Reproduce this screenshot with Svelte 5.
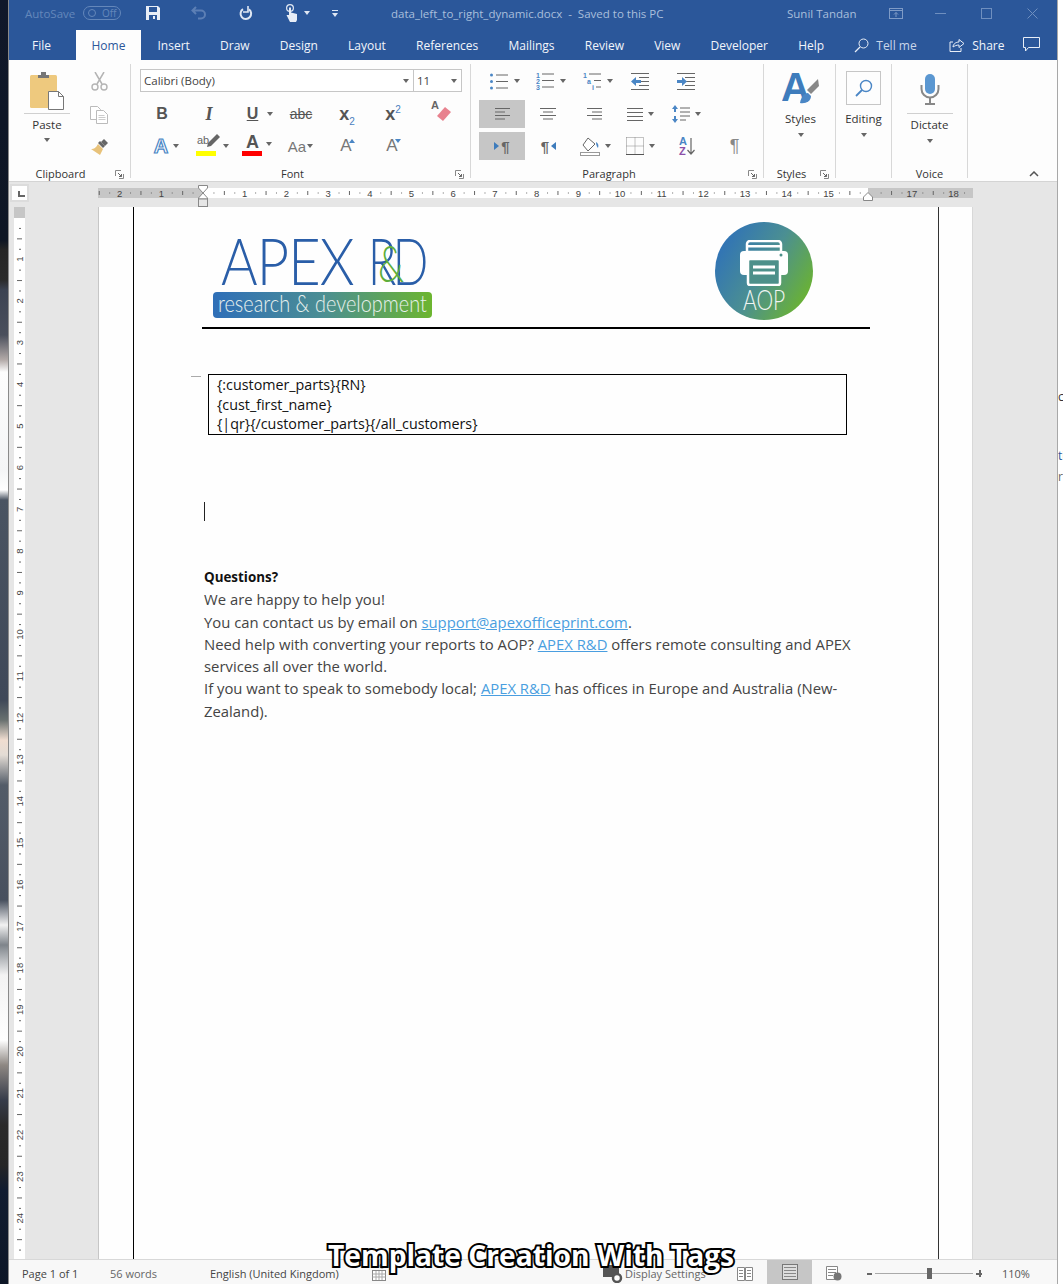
<script>
	const tabs = ['Insert', 'Draw', 'Design', 'Layout', 'References', 'Mailings', 'Review', 'View', 'Developer', 'Help'];
	const STEP = 41.7;
	const hTicks = [];
	for (let q = -10; q <= 74; q++) {
		if (q === 0 || q === 64) continue;
		hTicks.push({ x: 105 + (q * STEP) / 4, q, n: Math.abs(q / 4) });
	}
	const vTicks = [];
	for (let q = 1; q < 100; q++) {
		vTicks.push({ y: 10.5 + (q * STEP) / 4, q, n: q / 4 });
	}
</script>

{#snippet caret()}<i class="caret"></i>{/snippet}

{#snippet lines(w, h, rows)}
	<svg width={w} height={h} viewBox="0 0 {w} {h}">
		{#each rows as r}
			<rect x={r[0]} y={r[1]} width={r[2]} height="1" fill="#666" />
		{/each}
	</svg>
{/snippet}

{#snippet launcher()}
	<svg class="launch" width="9" height="9" viewBox="0 0 9 9">
		<path d="M.5 6V.5H6M8.5 4v4.5H4" fill="none" stroke="#888" />
		<path d="M3 3l3.5 3.5M6.5 4v2.5H4" fill="none" stroke="#666" />
	</svg>
{/snippet}

<div class="app">
	<div class="desktop"></div>
	<div class="window">
		<header class="titlebar">
			<span class="autosave">AutoSave</span>
			<span class="toggle"><i></i>Off</span>
			<svg class="qa save" width="16" height="16" viewBox="0 0 16 16">
				<path d="M1 1h12l2 2v12H1z" fill="#e8eef7" />
				<rect x="4" y="2" width="8" height="5" fill="#2b579a" />
				<rect x="4" y="10" width="8" height="5" fill="#2b579a" />
				<rect x="8" y="11" width="2" height="3" fill="#e8eef7" />
			</svg>
			<svg class="qa undo" width="16" height="14" viewBox="0 0 16 14">
				<path d="M5 1L1.5 4.5 5 8M2 4.5h8a4 4 0 0 1 0 8H7" fill="none" stroke="#5c7fb5" stroke-width="2" />
			</svg>
			<svg class="qa redo" width="15" height="15" viewBox="0 0 15 15">
				<path d="M5 3.2a5.3 5.3 0 1 0 6 .2" fill="none" stroke="#dfe7f3" stroke-width="2" />
				<path d="M10 0v6H5" fill="none" stroke="#dfe7f3" stroke-width="1.6" />
			</svg>
			<svg class="qa touch" width="14" height="18" viewBox="0 0 14 18">
				<circle cx="5" cy="4" r="3.4" fill="none" stroke="#dfe7f3" stroke-width="1.2" />
				<path d="M4 3.5h2v5l6 1.5v6l-1 2H5L1.5 11 4 11z" fill="#e8eef7" />
			</svg>
			<i class="caret light touch-caret"></i>
			<span class="qat-more"><b></b><i class="caret light"></i></span>
			<span class="doc-title">data_left_to_right_dynamic.docx &nbsp;-&nbsp; Saved to this PC</span>
			<span class="user">Sunil Tandan</span>
			<svg class="win display" width="14" height="11" viewBox="0 0 14 11">
				<rect x=".5" y=".5" width="13" height="10" fill="none" stroke="#7f9bc6" />
				<path d="M.5 2.5h13M7 9V4.5M5 6.5l2-2 2 2" fill="none" stroke="#7f9bc6" />
			</svg>
			<svg class="win min" width="11" height="11" viewBox="0 0 11 11"><path d="M0 5.5h11" stroke="#6f8fbf" /></svg>
			<svg class="win max" width="11" height="11" viewBox="0 0 11 11"><rect x=".5" y=".5" width="10" height="10" fill="none" stroke="#6f8fbf" /></svg>
			<svg class="win close" width="11" height="11" viewBox="0 0 11 11"><path d="M.5.5l10 10M10.5.5l-10 10" stroke="#6f8fbf" /></svg>
		</header>

		<nav class="tabs">
			<span class="tab file">File</span>
			<span class="tab home">Home</span>
			{#each tabs as t}<span class="tab">{t}</span>{/each}
			<span class="tell">
				<svg width="15" height="15" viewBox="0 0 15 15">
					<circle cx="9.5" cy="5.5" r="4.5" fill="none" stroke="#e8eef7" />
					<path d="M6 9L1 14" stroke="#e8eef7" stroke-width="1.3" />
				</svg>
				Tell me
			</span>
			<span class="share">
				<svg width="16" height="14" viewBox="0 0 16 14">
					<path d="M4 4H1v9.5h11V10" fill="none" stroke="#e8eef7" />
					<path d="M4 9c0-3 3-5 6-5V1.5l5 4-5 4V7C7.500 7 5.500 8 4 9z" fill="none" stroke="#e8eef7" />
				</svg>
				Share
			</span>
			<svg class="comment" width="17" height="15" viewBox="0 0 17 15">
				<path d="M.5.5h16v10H5.500L2.500 14v-3.500h-2z" fill="none" stroke="#e8eef7" />
			</svg>
		</nav>

		<section class="ribbon">
			<div class="group clip">
				<div class="tools clip-tools">
					<div class="paste">
						<svg width="35" height="38" viewBox="0 0 35 38">
							<rect x="0" y="3" width="27" height="33" rx="1.5" fill="#eec97e" />
							<path d="M8 3h3V0h5v3h3v3H8z" fill="#777" />
							<path d="M18.500 19.500h10l5 5v13h-15z" fill="#fff" stroke="#777" />
							<path d="M28.500 19.500v5h5" fill="none" stroke="#777" />
						</svg>
						<span class="split"></span>
						<span class="txt">Paste</span>
						{@render caret()}
					</div>
					<div class="clip-small">
						<svg width="17" height="19" viewBox="0 0 17 19">
							<path d="M4 0l7 12M13 0L6 12" stroke="#b4b4b4" stroke-width="1.500" fill="none" />
							<circle cx="4" cy="15" r="3" fill="none" stroke="#b4b4b4" stroke-width="1.400" />
							<circle cx="13" cy="15" r="3" fill="none" stroke="#b4b4b4" stroke-width="1.400" />
						</svg>
						<svg width="18" height="18" viewBox="0 0 18 18">
							<path d="M.5.500h7l3 3v10H.5z" fill="#fff" stroke="#bbb" />
							<path d="M6.500 4.500h7l4 4v9h-11z" fill="#fff" stroke="#bbb" />
							<path d="M8.500 9.500h6M8.500 11.500h7M8.500 13.500h7" stroke="#ccc" />
						</svg>
						<svg width="18" height="17" viewBox="0 0 18 17">
							<path d="M10 2l5 5-2 2-5-5z" fill="#666" />
							<path d="M14 0l4 4-3 3-4-4z" fill="#666" />
							<path d="M8 5l5 5-3 6-9-6c3 0 5-1 7-5z" fill="#e8c27a" />
						</svg>
					</div>
				</div>
				<div class="label">Clipboard{@render launcher()}</div>
			</div>

			<div class="group font">
				<div class="tools">
					<div class="combos">
						<span class="combo name">Calibri (Body){@render caret()}</span>
						<span class="combo size">11{@render caret()}</span>
					</div>
					<div class="row font-a">
						<span class="glyph bold">B</span>
						<span class="glyph ital">I</span>
						<span class="glyph under"><u>U</u>{@render caret()}</span>
						<span class="glyph strike">abc</span>
						<span class="glyph sc">x<sub>2</sub></span>
						<span class="glyph sc">x<sup>2</sup></span>
						<span class="glyph eraser">
							<b>A</b>
							<svg width="17" height="15" viewBox="0 0 17 15">
								<path d="M11 0l6 5-8 9-6-5z" fill="#e8828f" />
							</svg>
						</span>
					</div>
					<div class="row font-b">
						<span class="glyph effect">A{@render caret()}</span>
						<span class="glyph hl">
							<span class="ab">ab
								<svg width="15" height="15" viewBox="0 0 15 15"><path d="M12 0l3 3-9 9-4 1 1-4z" fill="#666" /></svg>
							</span>
							<i class="swatch yellow"></i>
							{@render caret()}
						</span>
						<span class="glyph col">A<i class="swatch red"></i>{@render caret()}</span>
						<span class="glyph case">Aa{@render caret()}</span>
						<span class="glyph grow">A<i class="tri up"></i></span>
						<span class="glyph grow">A<i class="tri down"></i></span>
					</div>
				</div>
				<div class="label">Font{@render launcher()}</div>
			</div>

			<div class="group para">
				<div class="tools">
					<div class="row para-a">
						<span class="pb">
							<svg width="18" height="17" viewBox="0 0 18 17">
								<circle cx="1.500" cy="2" r="1.500" fill="#4a86c5" /><circle cx="1.500" cy="8.500" r="1.500" fill="#4a86c5" /><circle cx="1.500" cy="15" r="1.500" fill="#4a86c5" />
								<path d="M6 2h12M6 8.500h12M6 15h12" stroke="#666" />
							</svg>{@render caret()}
						</span>
						<span class="pb">
							<svg width="18" height="18" viewBox="0 0 18 18">
								<text x="0" y="5.500" class="mini">1</text><text x="0" y="11.500" class="mini">2</text><text x="0" y="18" class="mini">3</text>
								<path d="M6 2h12M6 8.500h12M6 15h12" stroke="#666" />
							</svg>{@render caret()}
						</span>
						<span class="pb">
							<svg width="18" height="18" viewBox="0 0 18 18">
								<text x="0" y="5.500" class="mini">1</text><text x="4" y="11.500" class="mini">a</text><text x="9" y="18" class="mini">i</text>
								<path d="M6 2h12M11 8.500h7M13 15h5" stroke="#666" />
							</svg>{@render caret()}
						</span>
						<span class="pb">
							<svg width="18" height="17" viewBox="0 0 18 17">
								<path d="M0 .5h18M8 4.500h10M8 8.500h10M8 12.500h10M0 16.500h18" stroke="#666" />
								<path d="M0 8.500L5 4v3h5v3H5v3z" fill="#4a86c5" />
							</svg>
						</span>
						<span class="pb">
							<svg width="18" height="17" viewBox="0 0 18 17">
								<path d="M0 .5h18M8 4.500h10M8 8.500h10M8 12.500h10M0 16.500h18" stroke="#666" />
								<path d="M10 8.500L5 4v3H0v3h5v3z" fill="#4a86c5" />
							</svg>
						</span>
					</div>
					<div class="row para-b">
						<span class="pb active">{@render lines(15, 12, [[0, 0, 15], [0, 3.5, 10], [0, 7, 15], [0, 10.5, 10]])}</span>
						<span class="pb">{@render lines(16, 12, [[0, 0, 16], [3, 3.5, 10], [0, 7, 16], [3, 10.5, 10]])}</span>
						<span class="pb">{@render lines(15, 12, [[0, 0, 15], [5, 3.5, 10], [0, 7, 15], [5, 10.5, 10]])}</span>
						<span class="pb">{@render lines(16, 13, [[0, 0, 16], [0, 4, 16], [0, 8, 16], [0, 12, 16]])}{@render caret()}</span>
						<span class="pb">
							<svg width="18" height="18" viewBox="0 0 18 18">
								<path d="M3 0l3 4H4v3H2V4H0zM3 18l3-4H4v-3H2v3H0z" fill="#4a86c5" />
								<path d="M8 3h10M8 7h10M8 11h10M8 15h6" stroke="#666" />
							</svg>{@render caret()}
						</span>
					</div>
					<div class="row para-c">
						<span class="pb active dir"><i class="flag"></i><b>¶</b></span>
						<span class="pb dir"><b>¶</b><i class="flag back"></i></span>
						<span class="pb">
							<svg width="20" height="19" viewBox="0 0 20 19">
								<path d="M8 1l7 6-7 7-5-6z" fill="#fff" stroke="#666" />
								<path d="M16 5c2 1 3 3 2 6-1-1-2-3-2-6z" fill="#4a86c5" />
								<rect x=".5" y="15.500" width="19" height="3" fill="#fff" stroke="#999" />
							</svg>{@render caret()}
						</span>
						<span class="pb">
							<svg width="18" height="18" viewBox="0 0 18 18">
								<path d="M.5.5h17v17M.5.5v17M9 .5v17M.5 9h17" fill="none" stroke="#888" stroke-dasharray="1 1" />
								<path d="M0 17.500h18" stroke="#555" />
							</svg>{@render caret()}
						</span>
						<span class="pb sort">
							<span class="az"><b>A</b><b class="z">Z</b></span>
							<svg width="8" height="17" viewBox="0 0 8 17"><path d="M4 0v16M.5 12L4 16l3.500-4" fill="none" stroke="#666" stroke-width="1.200" /></svg>
						</span>
						<span class="pb pilcrow">¶</span>
					</div>
				</div>
				<div class="label">Paragraph{@render launcher()}</div>
			</div>

			<div class="group styles">
				<div class="tools big">
					<svg width="37" height="36" viewBox="0 0 37 36">
						<text x="-1" y="30" class="bigA">A</text>
						<path d="M36 8l1 7-8 8-4-4z" fill="#888" />
						<path d="M18 32c1-6 4-10 8-10l3 3c0 5-5 8-11 7z" fill="#4a86c5" />
					</svg>
					<span class="txt">Styles</span>
					{@render caret()}
				</div>
				<div class="label">Styles{@render launcher()}</div>
			</div>

			<div class="group editing">
				<div class="tools big">
					<span class="edit-box">
						<svg width="18" height="18" viewBox="0 0 18 18">
							<circle cx="11" cy="7" r="5.500" fill="none" stroke="#4a86c5" stroke-width="1.400" />
							<path d="M7 11l-6 6" stroke="#4a86c5" stroke-width="1.800" />
						</svg>
					</span>
					<span class="txt">Editing</span>
					{@render caret()}
				</div>
				<div class="label">&nbsp;</div>
			</div>

			<div class="group voice">
				<div class="tools big mic">
					<svg width="20" height="31" viewBox="0 0 20 31">
						<rect x="5" y="0" width="10" height="20" rx="5" fill="#5b97d1" />
						<path d="M1.500 11v4a8.500 8.500 0 0 0 17 0v-4" fill="none" stroke="#888" stroke-width="2" />
						<path d="M10 24v5M5 30h10" stroke="#888" stroke-width="2" />
					</svg>
					<span class="split"></span>
					<span class="txt">Dictate</span>
					{@render caret()}
				</div>
				<div class="label">Voice</div>
			</div>

			<svg class="collapse" width="10" height="6" viewBox="0 0 10 6"><path d="M1 5l4-4 4 4" fill="none" stroke="#555" stroke-width="1.500" /></svg>
		</section>

		<div class="hruler">
			<span class="corner"><i></i></span>
			<div class="band">
				<svg width="875" height="10" viewBox="0 0 875 10">
					<rect width="875" height="10" fill="#fff" />
					<rect width="105" height="10" fill="#c6c6c6" />
					<rect x="770" width="105" height="10" fill="#c6c6c6" />
					{#each hTicks as t}
						{#if t.q % 4 === 0}
							<text x={t.x} y="8.500" class="num" text-anchor="middle">{t.n}</text>
						{:else if t.q % 2 === 0}
							<rect x={t.x} y="3" width="1" height="4" fill="#666" />
						{:else}
							<rect x={t.x} y="4.500" width="1" height="1" fill="#666" />
						{/if}
					{/each}
				</svg>
				<svg class="indent-l" width="10" height="22" viewBox="0 0 10 22">
					<path d="M.5.500h9V3L5 8 .5 3zM5 8l4.500 5v1H.5v-1z" fill="#fff" stroke="#888" />
					<rect x=".5" y="14" width="9" height="7.500" fill="#e6e6e6" stroke="#888" />
				</svg>
				<svg class="indent-r" width="10" height="9" viewBox="0 0 10 9">
					<path d="M5 .5l4.500 4.500v3.500h-9V5z" fill="#fff" stroke="#888" />
				</svg>
			</div>
		</div>

		<main class="workspace">
			<div class="vruler">
				<svg width="11" height="1052" viewBox="0 0 11 1052">
					<rect width="11" height="1052" fill="#fff" />
					<rect width="11" height="11" fill="#c6c6c6" />
					{#each vTicks as t}
						{#if t.q % 4 === 0}
							<text class="num" text-anchor="middle" transform="translate(8.500 {t.y}) rotate(-90)">{t.n}</text>
						{:else if t.q % 2 === 0}
							<rect x="3" y={t.y} width="5" height="1" fill="#666" />
						{:else}
							<rect x="5" y={t.y} width="2" height="1" fill="#666" />
						{/if}
					{/each}
				</svg>
			</div>
			<div class="page">
				<div class="frame">
					<div class="sheet">
						<div class="logos">
							<div class="apex">
								<div class="apex-name"><span class="word">APEX</span><span class="rd">RD<em>&amp;</em></span></div>
								<div class="apex-band"><span>research &amp; development</span></div>
							</div>
							<div class="aop">
								<svg width="50" height="46" viewBox="0 0 50 46">
									<path d="M8 12V4a3 3 0 0 1 3-3h28a3 3 0 0 1 3 3v8z" fill="none" stroke="#fff" stroke-width="2.500" />
									<rect x="8" y="5" width="34" height="2.500" fill="#fff" />
									<path d="M5 11h40a4 4 0 0 1 4 4v16a4 4 0 0 1-4 4H5a4 4 0 0 1-4-4V15a4 4 0 0 1 4-4z" fill="#fff" />
									<rect x="9" y="19" width="32" height="26" rx="2" fill="#4d908a" stroke="#fff" stroke-width="2.500" />
									<path d="M14 27h22M14 33h22" stroke="#fff" stroke-width="3" />
									<circle cx="42" cy="15" r="1.500" fill="#4d908a" />
								</svg>
								<span>AOP</span>
							</div>
						</div>
						<div class="rule"></div>
						<div class="box">
							<div>{'{'}:customer_parts}{'{'}RN}</div>
							<div>{'{'}cust_first_name}</div>
							<div>{'{'}|qr}{'{'}/customer_parts}{'{'}/all_customers}</div>
						</div>
						<div class="cursor"></div>
						<div class="copy">
							<strong>Questions?</strong><br />
							We are happy to help you!<br />
							You can contact us by email on <a href="#top">support@apexofficeprint.com</a>.<br />
							Need help with converting your reports to AOP? <a href="#top">APEX R&amp;D</a> offers remote consulting and APEX services all over the world.<br />
							If you want to speak to somebody local; <a href="#top">APEX R&amp;D</a> has offices in Europe and Australia (New-Zealand).
						</div>
					</div>
				</div>
			</div>
		</main>

		<footer class="status">
			<span class="s-page">Page 1 of 1</span>
			<span class="s-words">56 words</span>
			<span class="s-lang">English (United Kingdom)</span>
			<svg class="s-cal" width="14" height="18" viewBox="0 0 14 18">
				<circle cx="10" cy="3" r="2.500" fill="#666" />
				<rect x=".5" y="7.500" width="13" height="10" fill="#fff" stroke="#888" />
				<path d="M.5 11h13M.5 14h13M4 8v9M7 8v9M10 8v9" stroke="#aaa" />
			</svg>
			<svg class="s-disp" width="20" height="18" viewBox="0 0 20 18">
				<rect width="16" height="12" fill="#555" />
				<circle cx="14" cy="13" r="4" fill="#fff" stroke="#555" stroke-width="2.500" />
			</svg>
			<span class="s-disptxt">Display Settings</span>
			<svg class="s-read" width="16" height="14" viewBox="0 0 16 14">
				<path d="M.5.5h7v13h-7zM8.500.5h7v13h-7zM2 3.500h4M2 6.500h4M2 9.500h4M10 3.500h4M10 6.500h4M10 9.500h4" fill="#fff" stroke="#888" />
			</svg>
			<span class="s-print">
				<svg width="16" height="16" viewBox="0 0 16 16">
					<rect x=".5" y=".5" width="15" height="15" fill="#ddd" stroke="#777" />
					<path d="M2 3.500h12M2 6.500h12M2 9.500h12M2 12.500h12" stroke="#888" />
				</svg>
			</span>
			<svg class="s-web" width="16" height="15" viewBox="0 0 16 15">
				<path d="M.5.5h11v13H.5zM2 3.500h8M2 6.500h8M2 9.500h5" fill="#fff" stroke="#888" />
				<circle cx="11.500" cy="10.500" r="4" fill="#777" />
			</svg>
			<span class="zoom">
				<i class="z-minus"></i>
				<span class="z-track"><i class="z-thumb"></i></span>
				<i class="z-plus"></i>
			</span>
			<span class="s-pct">110%</span>
		</footer>
	</div>
	<div class="behind">
		<span class="f1">c</span>
		<span class="f2">ti</span>
		<span class="f3">r</span>
	</div>
	<div class="caption">Template Creation With Tags</div>
</div>

<style>
	:global(body) {
		margin: 0;
		background: #fff;
	}
	.app {
		position: relative;
		display: flex;
		width: 1063px;
		height: 1284px;
		overflow: hidden;
		font-family: 'Open Sans', 'Noto Sans', sans-serif;
		color: #444;
	}
	.desktop {
		width: 8px;
		flex: none;
		background: linear-gradient(
			180deg,
			#10182a 0,
			#0e1624 240px,
			#262626 250px,
			#2b2b2b 280px,
			#3c4352 290px,
			#4a4f5c 335px,
			#b3aaa8 360px,
			#fdfdfd 372px,
			#f4f5f6 470px,
			#fff 490px,
			#4a5462 500px,
			#3f4858 700px,
			#68706f 720px,
			#f0ddd0 740px,
			#e3dcd5 755px,
			#535c68 785px,
			#48505e 900px,
			#f2f2f2 925px,
			#7e848a 945px,
			#f3f3f3 975px,
			#fff 1040px,
			#8e8883 1065px,
			#373c4a 1100px,
			#2a2a2a 1125px,
			#262626 1165px,
			#111c30 1190px,
			#0d1626 1284px
		);
	}
	.window {
		width: 1050px;
		flex: none;
		display: flex;
		flex-direction: column;
		border-left: 1px solid #8a8a8a;
		border-right: 1px solid #a8a8a8;
		box-sizing: border-box;
		background: #e6e6e6;
	}

	.titlebar {
		position: relative;
		height: 30px;
		flex: none;
		box-sizing: border-box;
		padding-bottom: 4px;
		display: flex;
		align-items: center;
		background: #2b579a;
		font-size: 11.500px;
		white-space: nowrap;
	}
	.autosave {
		margin-left: 16px;
		width: 58px;
		color: #6487ba;
	}
	.toggle {
		display: flex;
		align-items: center;
		gap: 6px;
		width: 38px;
		height: 14px;
		box-sizing: border-box;
		border: 1px solid #6487ba;
		border-radius: 8px;
		padding-left: 4px;
		font-size: 10px;
		color: #6487ba;
	}
	.toggle i {
		width: 6px;
		height: 6px;
		border: 1px solid #6487ba;
		border-radius: 50%;
	}
	.save {
		margin-left: 24px;
	}
	.undo {
		margin-left: 30px;
	}
	.redo {
		margin-left: 31px;
	}
	.touch {
		margin-left: 32px;
	}
	.touch-caret {
		margin-left: 5px;
	}
	.qat-more {
		display: flex;
		flex-direction: column;
		align-items: center;
		gap: 2px;
		margin-left: 22px;
	}
	.qat-more b {
		width: 6px;
		height: 1px;
		background: #dfe7f3;
	}
	.doc-title {
		margin-left: 53px;
		width: 396px;
		color: #a9bfdc;
	}
	.user {
		color: #a9bfdc;
		width: 102px;
		font-size: 11.500px;
	}
	.win {
		flex: none;
	}
	.min {
		margin-left: 32px;
	}
	.max {
		margin-left: 35px;
	}
	.close {
		margin-left: 35px;
	}

	.caret {
		display: inline-block;
		width: 0;
		height: 0;
		border-top: 4px solid #666;
		border-left: 3.500px solid transparent;
		border-right: 3.500px solid transparent;
		flex: none;
	}
	.caret.light {
		border-top-color: #dfe7f3;
	}

	.tabs {
		height: 30px;
		flex: none;
		display: flex;
		align-items: stretch;
		background: #2b579a;
		font-size: 12px;
		color: #f2f5fa;
		white-space: nowrap;
	}
	.tab {
		display: flex;
		align-items: center;
		padding: 0 15.100px;
	}
	.file {
		padding: 0 25px 0 23px;
	}
	.home {
		background: #fdfdfd;
		color: #2b579a;
		padding: 0 15.500px;
		margin-right: 1.500px;
	}
	.tell,
	.share {
		display: flex;
		align-items: center;
		gap: 7px;
		color: #c9d6ea;
	}
	.tell {
		margin-left: 15px;
		width: 95px;
	}
	.share {
		width: 74px;
		color: #f2f5fa;
	}
	.comment {
		align-self: center;
		margin-top: -2px;
	}

	.ribbon {
		position: relative;
		height: 122px;
		flex: none;
		box-sizing: border-box;
		display: flex;
		padding-top: 4px;
		background: #fdfdfd;
		border-bottom: 1px solid #d4d4d4;
		font-size: 11.500px;
	}
	.group {
		height: 114px;
		box-sizing: border-box;
		display: flex;
		flex-direction: column;
		border-right: 1px solid #d8d8d8;
	}
	.tools {
		height: 103px;
		flex: none;
	}
	.label {
		position: relative;
		height: 11px;
		line-height: 14px;
		text-align: center;
		font-size: 11px;
		color: #333;
	}
	.launch {
		position: absolute;
		right: 6px;
		top: 3px;
	}
	.txt {
		color: #333;
	}
	.clip {
		width: 122px;
	}
	.clip .label {
		padding-right: 18px;
	}
	.clip-tools {
		display: flex;
		padding-top: 8px;
		box-sizing: border-box;
	}
	.paste {
		display: flex;
		flex-direction: column;
		align-items: center;
		width: 46px;
		margin-left: 15px;
	}
	.split {
		width: 46px;
		height: 1px;
		background: #d0d0d0;
		margin: 3px 0 3px;
	}
	.paste .caret,
	.big .caret {
		margin-top: 6px;
	}
	.clip-small {
		display: flex;
		flex-direction: column;
		align-items: center;
		gap: 15px;
		margin-left: 20px;
		width: 18px;
	}

	.font {
		width: 340px;
	}
	.font .label,
	.para .label {
		padding-right: 16px;
	}
	.combos {
		display: flex;
		margin: 5px 0 0 9px;
		height: 23px;
		width: 322px;
		box-sizing: border-box;
		border: 1px solid #c6c6c6;
		background: #fff;
		color: #444;
		font-size: 11.500px;
	}
	.combo {
		display: flex;
		align-items: center;
		justify-content: space-between;
		padding: 0 4px 0 3px;
		box-sizing: border-box;
	}
	.name {
		width: 273px;
		border-right: 1px solid #c6c6c6;
	}
	.size {
		flex: 1;
	}
	.row {
		display: grid;
		align-items: center;
	}
	.font-a {
		grid-template-columns: 46px 48px 46px 44px 48px 44px 54px;
		margin: 8px 0 0 8px;
		height: 28px;
	}
	.font-b {
		grid-template-columns: 47px 46px 46px 45px 46px 46px;
		margin: 4px 0 0 8px;
		height: 28px;
	}
	.glyph {
		position: relative;
		display: flex;
		align-items: center;
		justify-content: center;
		gap: 6px;
		font-family: 'Liberation Sans', sans-serif;
		font-size: 16px;
		color: #555;
	}
	.bold {
		font-weight: 700;
	}
	.ital {
		font-family: 'Liberation Serif', serif;
		font-style: italic;
		font-weight: 700;
		font-size: 18px;
	}
	.under {
		font-weight: 700;
		padding-left: 8px;
		gap: 9px;
	}
	.strike {
		font-size: 14px;
		text-decoration: line-through;
	}
	.sc {
		display: block;
		text-align: center;
		font-size: 18px;
		font-weight: 700;
	}
	.sc sub,
	.sc sup {
		font-size: 10px;
		font-weight: 400;
		color: #4a7fc0;
		line-height: 0;
	}
	.eraser b {
		position: absolute;
		left: 16px;
		top: -8px;
		font-size: 11px;
		color: #666;
	}
	.eraser svg {
		margin-left: 0;
	}
	.effect {
		font-size: 20px;
		color: #fff;
		font-weight: 700;
		gap: 5px;
		padding-left: 8px;
		-webkit-text-stroke: 1.200px #4a86c5;
	}
	.effect .caret {
		-webkit-text-stroke: 0;
	}
	.hl {
		gap: 0;
		height: 28px;
	}
	.ab {
		position: absolute;
		left: 11px;
		top: 2px;
		font-size: 11px;
		color: #666;
	}
	.ab svg {
		position: absolute;
		left: 8px;
		top: 0;
	}
	.swatch {
		position: absolute;
		height: 5px;
		width: 20px;
		bottom: 4px;
	}
	.hl .swatch {
		left: 10px;
	}
	.hl .caret {
		position: absolute;
		left: 37px;
		top: 12px;
	}
	.yellow {
		background: #ff0;
	}
	.red {
		background: #f00;
		left: 10px;
	}
	.col {
		font-size: 18px;
		font-weight: 700;
		justify-content: flex-start;
		align-items: flex-start;
		line-height: 20px;
		padding-left: 14px;
		gap: 7px;
		height: 28px;
	}
	.col .caret {
		margin-top: 10px;
	}
	.case {
		font-size: 15px;
		color: #777;
		gap: 1px;
	}
	.grow {
		font-size: 17px;
		color: #777;
		font-weight: 400;
	}
	.tri {
		position: absolute;
		left: 26px;
		top: 3px;
		width: 0;
		border-left: 3.500px solid transparent;
		border-right: 3.500px solid transparent;
	}
	.tri.up {
		border-bottom: 4px solid #4a86c5;
	}
	.tri.down {
		border-top: 4px solid #4a86c5;
	}

	.para {
		width: 293px;
	}
	.para .row {
		margin-left: 8px;
		height: 28px;
	}
	.para-a {
		grid-template-columns: 46px 47px 45px 46px 46px;
		margin-top: 3px;
	}
	.para-a .pb:nth-child(-n + 3) {
		padding-left: 11px;
		justify-content: flex-start;
		box-sizing: border-box;
		gap: 6px;
	}
	.para-b {
		grid-template-columns: 46px 46px 46px 46px 47px;
		margin-top: 5px;
	}
	.para-c {
		grid-template-columns: 46px 47px 46px 45px 48px 47px;
		margin-top: 4px;
	}
	.pb {
		height: 28px;
		display: flex;
		align-items: center;
		justify-content: center;
		gap: 5px;
	}
	.active {
		background: #c6c6c6;
	}
	.dir {
		gap: 2px;
		font-family: 'Liberation Sans', sans-serif;
		font-size: 15px;
		color: #666;
	}
	.flag {
		width: 0;
		border-top: 4.500px solid transparent;
		border-bottom: 4.500px solid transparent;
		border-left: 5px solid #3e7cbc;
	}
	.flag.back {
		border-left: 0;
		border-right: 5px solid #3e7cbc;
	}
	.sort {
		gap: 0;
	}
	.az {
		display: flex;
		flex-direction: column;
		font-family: 'Liberation Sans', sans-serif;
		font-size: 11px;
		line-height: 10px;
		color: #4a86c5;
	}
	.z {
		color: #8c4fa8;
	}
	.pilcrow {
		font-family: 'Liberation Sans', sans-serif;
		font-size: 18px;
		color: #888;
	}
	.mini {
		font-family: 'Liberation Sans', sans-serif;
		font-size: 7px;
		font-weight: 700;
		fill: #4a86c5;
	}

	.big {
		display: flex;
		flex-direction: column;
		align-items: center;
		box-sizing: border-box;
		padding-top: 7px;
	}
	.big .txt {
		line-height: 16px;
		margin-top: 4px;
	}
	.bigA {
		font-family: 'Liberation Sans', sans-serif;
		font-weight: 700;
		font-size: 40px;
		fill: #3e7cbc;
	}
	.styles {
		width: 72px;
	}
	.styles .big {
		padding-left: 2px;
	}
	.styles .label {
		padding-right: 16px;
	}
	.editing {
		width: 56px;
	}
	.edit-box {
		display: flex;
		align-items: center;
		justify-content: center;
		width: 35px;
		height: 34px;
		box-sizing: border-box;
		border: 1px solid #c6c6c6;
		margin-bottom: 2px;
	}
	.voice {
		width: 76px;
	}
	.mic {
		padding-top: 10px;
	}
	.mic .split {
		margin: 8px 0 3px;
	}
	.mic .txt {
		margin-top: 0;
	}
	.collapse {
		position: absolute;
		right: 18px;
		bottom: 4px;
	}

	.hruler {
		position: relative;
		height: 25px;
		flex: none;
		display: flex;
		background: #e6e6e6;
	}
	.corner {
		position: absolute;
		left: 3px;
		top: 4px;
		width: 15px;
		height: 14px;
		background: #fff;
		box-shadow: 0 0 0 2px #dcdcdc;
	}
	.corner i {
		position: absolute;
		left: 6px;
		top: 5px;
		width: 5px;
		height: 4px;
		border-left: 2px solid #666;
		border-bottom: 2px solid #666;
	}
	.band {
		position: relative;
		margin: 6px 0 0 89px;
		height: 10px;
	}
	.band svg:first-child {
		display: block;
	}
	.num {
		font-family: 'Liberation Sans', sans-serif;
		font-size: 9.500px;
		fill: #444;
	}
	.indent-l {
		position: absolute;
		left: 100px;
		top: -3px;
	}
	.indent-r {
		position: absolute;
		left: 765px;
		top: 4px;
	}

	.workspace {
		flex: 1;
		min-height: 0;
		display: flex;
		overflow: hidden;
		background: #e6e6e6;
	}
	.vruler {
		margin-left: 5px;
		width: 11px;
		flex: none;
	}
	.page {
		margin-left: 73px;
		width: 875px;
		flex: none;
		box-sizing: border-box;
		background: #fefefe;
		border-left: 1px solid #c6c6c6;
		border-right: 1px solid #d8d8d8;
		padding-left: 34px;
	}
	.frame {
		width: 806px;
		height: 100%;
		box-sizing: border-box;
		border-left: 1px solid #000;
		border-right: 1px solid #333;
	}
	.sheet {
		margin-left: 68px;
		width: 668px;
	}
	.logos {
		display: flex;
		justify-content: space-between;
		height: 120px;
		padding: 15px 57px 0 11px;
		box-sizing: border-box;
	}
	.apex {
		padding-top: 11px;
		width: 219px;
	}
	.apex-name {
		display: flex;
		height: 59px;
		padding-left: 8px;
		font-family: Lato, sans-serif;
		font-weight: 300;
		font-size: 65px;
		line-height: 54px;
		color: #2a5ea8;
		white-space: nowrap;
	}
	.word {
		display: inline-block;
		width: 147px;
		letter-spacing: -1px;
		transform: scaleX(0.86);
		transform-origin: left;
	}
	.rd {
		position: relative;
		display: inline-block;
		letter-spacing: -5px;
		transform: scaleX(0.72);
		transform-origin: left;
	}
	.rd em {
		position: absolute;
		left: 14px;
		top: 2px;
		font-style: normal;
		font-size: 52px;
		letter-spacing: 0;
		color: #5fae3a;
	}
	.apex-band {
		height: 26px;
		border-radius: 4px;
		background: linear-gradient(90deg, #2f6fb8, #4b8e93 50%, #6cb52f);
		color: #e8f1ee;
		font-family: Lato, sans-serif;
		font-weight: 300;
		font-size: 24px;
		line-height: 22px;
		padding-left: 5px;
		white-space: nowrap;
		overflow: hidden;
	}
	.apex-band span {
		display: inline-block;
		transform: scaleX(0.83);
		transform-origin: left;
	}
	.aop {
		display: flex;
		flex-direction: column;
		align-items: center;
		width: 98px;
		height: 98px;
		box-sizing: border-box;
		padding-top: 18px;
		border-radius: 50%;
		background: linear-gradient(120deg, #2f72b8 10%, #4b8f92 50%, #6cb42e 90%);
		color: #f0f5f2;
		font-family: Lato, sans-serif;
		font-weight: 300;
		font-size: 27px;
		line-height: 24px;
	}
	.aop span {
		transform: scaleX(0.78);
		margin-top: 2px;
	}
	.rule {
		height: 2px;
		background: #000;
	}
	.box {
		position: relative;
		margin: 45px 0 0 6px;
		width: 639px;
		height: 61px;
		box-sizing: border-box;
		border: 1px solid #000;
		padding: 0 0 0 8px;
		font-size: 14.300px;
		line-height: 19.500px;
		color: #111;
	}
	.box::before {
		content: '';
		position: absolute;
		left: -18px;
		top: 1px;
		width: 10px;
		height: 1px;
		background: #aaa;
	}
	.cursor {
		margin: 67px 0 0 2px;
		width: 1px;
		height: 19px;
		background: #222;
	}
	.copy {
		margin: 44px 0 0 2px;
		width: 650px;
		font-size: 14.850px;
		line-height: 22.300px;
		color: #444;
	}
	.copy strong {
		font-size: 13.400px;
		color: #111;
	}
	.copy a {
		color: #4a9ee0;
	}

	.status {
		position: relative;
		height: 25px;
		flex: none;
		box-sizing: border-box;
		padding-top: 3px;
		display: flex;
		align-items: center;
		background: #f8f8f8;
		border-top: 1px solid #d8d8d8;
		font-size: 11px;
		color: #444;
		white-space: nowrap;
	}
	.status span {
		flex: none;
	}
	.s-page {
		margin-left: 13px;
		width: 88px;
	}
	.s-words {
		width: 100px;
		color: #666;
	}
	.s-lang {
		width: 162px;
	}
	.s-cal {
		margin-top: -4px;
		flex: none;
	}
	.s-disp {
		margin-left: 217px;
		flex: none;
	}
	.s-disptxt {
		margin-left: 2px;
		width: 112px;
		color: #666;
	}
	.s-read {
		flex: none;
	}
	.s-print {
		align-self: stretch;
		margin: -3px 0 0 14px;
		width: 45px;
		display: flex;
		align-items: center;
		justify-content: center;
		background: #c6c6c6;
	}
	.s-web {
		margin-left: 14px;
		flex: none;
	}
	.zoom {
		display: flex;
		align-items: center;
		margin-left: 25px;
		width: 115px;
	}
	.z-minus {
		width: 6px;
		height: 2px;
		background: #666;
	}
	.z-track {
		position: relative;
		width: 98px;
		height: 1px;
		margin: 0 3px 0 3px;
		background: #aaa;
	}
	.z-thumb {
		position: absolute;
		left: 52px;
		top: -5px;
		width: 5px;
		height: 11px;
		background: #666;
	}
	.z-plus {
		position: relative;
		width: 7px;
		height: 2px;
		background: #666;
	}
	.z-plus::after {
		content: '';
		position: absolute;
		left: 2.500px;
		top: -2.500px;
		width: 2px;
		height: 7px;
		background: #666;
	}
	.s-pct {
		margin-left: 20px;
		color: #555;
	}

	.behind {
		flex: 1;
		position: relative;
		background: #fff;
		font-size: 12px;
		color: #2b579a;
		overflow: hidden;
	}
	.f1,
	.f2,
	.f3 {
		position: absolute;
		left: 0;
	}
	.f1 {
		top: 388px;
		color: #333;
	}
	.f2 {
		top: 447px;
	}
	.f3 {
		top: 468px;
		color: #666;
	}

	.caption {
		position: absolute;
		left: 328px;
		top: 1236px;
		font-family: 'Open Sans', sans-serif;
		font-weight: 700;
		font-size: 28.200px;
		line-height: 38px;
		color: #fff;
		-webkit-text-stroke: 4px #000;
		paint-order: stroke fill;
		white-space: nowrap;
	}
</style>
